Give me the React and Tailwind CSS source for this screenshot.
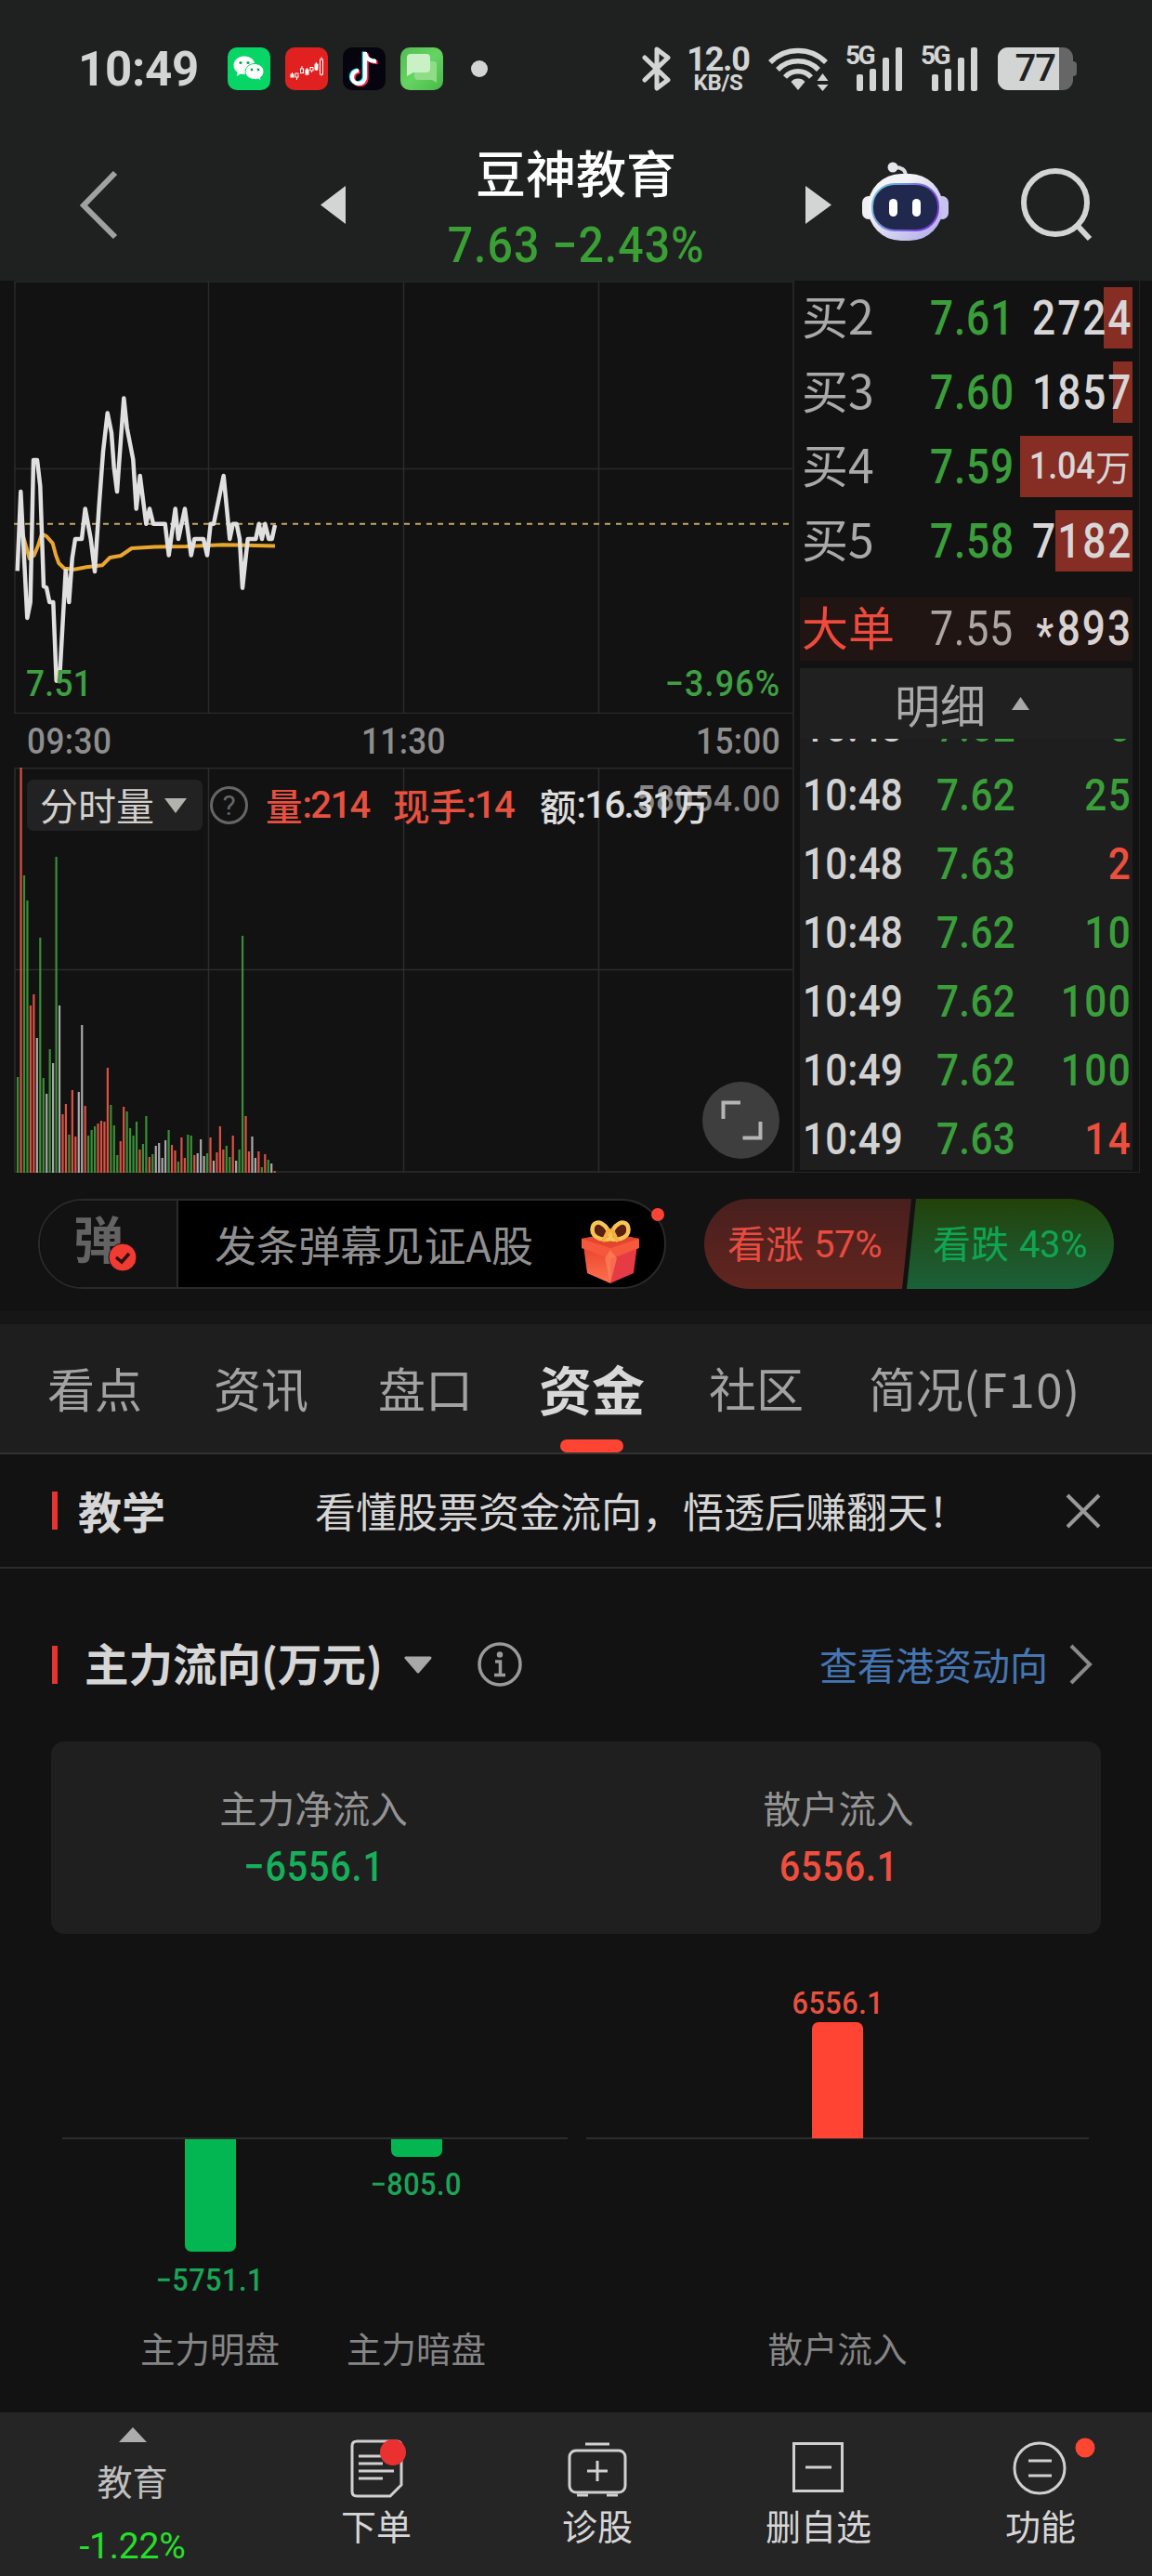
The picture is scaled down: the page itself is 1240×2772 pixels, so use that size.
import React from "react";

const CJK = "font-['Noto_Sans_CJK_SC',sans-serif]";
const NUM = "font-[Roboto,sans-serif] whitespace-nowrap";

const PRICE =
  "18.7,614.4 22.3,529 29.3,665 32.7,648 36,495 40,495 43.3,523 47,631 50,632.3 53.3,648 57.3,648 60.7,732.7 64,732.7 70.7,614 74.3,648 77.7,601 81,580 88,580 91.7,547.5 97.7,580 102,615 106.7,543.4 111,486 115.7,444.4 120,465.7 122.7,503 126,529 133.3,428.5 136.7,460.6 143.3,494.4 146.7,547.5 150.7,512 157.3,563.7 161,547.5 165,563.7 177.7,563.7 181.7,597.5 188.7,547.5 192,580 199,547.5 205.7,597.5 209.3,580 219,580 223,597.5 226.7,563.7 230,563.7 240.7,512 247.3,580 250.7,563.7 254.7,563.7 258,580 261,632.7 266.7,580 275.3,580 278.7,563.7 282,580 285.3,563.7 289.3,580 292.7,580 296,565";
const AVERAGE =
  "25,577 31.7,601 36.7,597.5 41,587 45,574.5 50,577 56.7,584.6 60,597 63.3,606 69.3,611.7 80,612.7 93,610.3 110,608.3 118.3,600 130,598 141.7,590 166.7,588.4 200,588 240,586.3 296,587.4";

const COLORS = { r: "#dc5142", g: "#3a8f36", w: "#aaa8a8" };
const VOLUME = [
  ["g", 103], ["r", 437], ["g", 320], ["g", 293], ["r", 180], ["r", 192], ["w", 145], ["g", 253], ["g", 102],
  ["w", 85], ["g", 133], ["w", 118], ["g", 340], ["w", 180], ["r", 63], ["r", 74], ["g", 41], ["r", 89],
  ["r", 39], ["w", 87], ["w", 159], ["r", 72], ["g", 40], ["g", 46], ["g", 50], ["r", 53], ["r", 56],
  ["r", 55], ["r", 113], ["g", 73], ["g", 51], ["g", 19], ["r", 34], ["r", 71], ["g", 66], ["g", 48],
  ["g", 40], ["g", 55], ["r", 25], ["g", 31], ["g", 61], ["r", 17], ["g", 20], ["w", 29], ["w", 32],
  ["w", 16], ["w", 35], ["g", 46], ["r", 30], ["r", 24], ["g", 12], ["r", 38], ["r", 16], ["g", 41],
  ["g", 40], ["r", 19], ["w", 21], ["w", 36], ["w", 18], ["g", 21], ["r", 38], ["w", 13], ["r", 22],
  ["r", 50], ["r", 25], ["g", 29], ["g", 17], ["r", 40], ["w", 13], ["g", 25], ["g", 255], ["r", 61],
  ["r", 23], ["w", 39], ["w", 16], ["r", 23], ["g", 6], ["r", 20], ["g", 14], ["w", 10], ["r", 2],
];

const BIDS = [
  { label: "买2", price: "7.61", vol: "2724", bar: "w-[31px]" },
  { label: "买3", price: "7.60", vol: "1857", bar: "w-[21px]" },
  { label: "买4", price: "7.59", vol: "1.04", unit: "万", bar: "w-[121px]" },
  { label: "买5", price: "7.58", vol: "7182", bar: "w-[83px]" },
];

const TRADES = [
  ["10:48", "7.62", "6", "g"],
  ["10:48", "7.62", "25", "g"],
  ["10:48", "7.63", "2", "r"],
  ["10:48", "7.62", "10", "g"],
  ["10:49", "7.62", "100", "g"],
  ["10:49", "7.62", "100", "g"],
  ["10:49", "7.63", "14", "r"],
];

function Signal() {
  return (
    <div className="relative h-[48px] w-[63px]">
      <span className={`${NUM} absolute left-0 top-0 text-[28px] font-bold leading-[20px] tracking-[-2.500px] text-[#d3d5d4]`}>5G</span>
      <svg className="block h-[48px] w-[63px]" viewBox="0 0 63 48" fill="#d3d5d4">
        <rect x="12" y="30" width="7" height="18" rx="2" />
        <rect x="26" y="24" width="7" height="24" rx="2" />
        <rect x="40" y="12" width="7" height="36" rx="2" />
        <rect x="54" y="1" width="7" height="47" rx="2" />
      </svg>
    </div>
  );
}

function StatusBar() {
  return (
    <div className="flex h-[148px] items-center">
      <span className={`${NUM} ml-[84px] w-[161px] text-[51px] font-bold leading-none tracking-[-.3px] text-[#d3d5d4]`}>10:49</span>
      <div className="flex gap-[16px]">
        <svg className="h-[46px] w-[46px]" viewBox="0 0 46 46">
          <rect width="46" height="46" rx="10" fill="#07d566" />
          <path d="M18 9.500c-6.600 0-11.500 4.300-11.500 9.700 0 3.100 1.500 5.700 4.200 7.500l-1 4 4.500-2.200c1.200.3 2.500.4 3.800.4 6.600 0 11.500-4.300 11.500-9.700S24.600 9.500 18 9.500z" fill="#fff" />
          <path d="M29 17.500c-5.600 0-10 3.900-10 8.500s4.400 8.500 10 8.500c1.300 0 2.500-.2 3.600-.6l3.600 1.900-.9-3.400c2.300-1.600 3.700-3.800 3.700-6.400 0-4.600-4.400-8.500-10-8.500z" fill="#fff" stroke="#07d566" />
          <g fill="#07a850"><circle cx="14" cy="16.500" r="1.600" /><circle cx="22" cy="16.500" r="1.600" /><circle cx="26" cy="24" r="1.400" /><circle cx="33" cy="24" r="1.400" /></g>
        </svg>
        <svg className="h-[46px] w-[46px]" viewBox="0 0 46 46">
          <rect width="46" height="46" rx="10" fill="#e0211f" />
          <g stroke="#fff" strokeWidth="1" fill="none">
            <rect x="6" y="29" width="3" height="3" fill="#fff" /><path d="M7.500 27v5" />
            <rect x="11" y="28" width="3" height="4" /><path d="M12.500 32v3" />
            <rect x="16.500" y="23" width="3" height="4.500" /><path d="M18 20v3" />
            <rect x="22" y="24" width="3" height="5" fill="#fff" /><path d="M23.500 22v8" />
            <rect x="27" y="21.500" width="3" height="3.500" /><path d="M28.500 25v2" />
            <rect x="32" y="18" width="3" height="6" fill="#fff" /><path d="M33.500 16v9" />
            <rect x="37.500" y="13" width="3" height="16" /><path d="M39 10.500V13M39 29v1.500" />
          </g>
        </svg>
        <svg className="h-[46px] w-[46px]" viewBox="0 0 46 46">
          <rect width="46" height="46" rx="10" fill="#05040f" />
          <g fill="none" strokeWidth="4.200">
            <path d="M24 5v27a7 7 0 1 1-7-7M24 6c1 6 5 9 12 9" stroke="#25e5e5" transform="translate(-1.200,-.6)" />
            <path d="M24 5v27a7 7 0 1 1-7-7M24 6c1 6 5 9 12 9" stroke="#f92b55" transform="translate(1.600,1.200)" />
            <path d="M24 5v27a7 7 0 1 1-7-7M24 6c1 6 5 9 12 9" stroke="#fff" />
          </g>
        </svg>
        <svg className="h-[46px] w-[46px]" viewBox="0 0 46 46">
          <defs><linearGradient id="msg" x1="0" y1="0" x2="1" y2="1"><stop offset="0" stopColor="#52bd52" /><stop offset=".5" stopColor="#66d462" /><stop offset="1" stopColor="#47b847" /></linearGradient></defs>
          <rect width="46" height="46" rx="10" fill="url(#msg)" />
          <path d="M18 15h18q3 0 3 3v20l-5-3H19q-4 0-4-4V18z" fill="#8fdd87" />
          <path d="M11 7h17q4 0 4 4v12q0 4-4 4H14l-7 4V11q0-4 4-4z" fill="#caf0c6" />
        </svg>
      </div>
      <span className="ml-[30px] size-[18px] rounded-full bg-[#d3d5d4]" />
      <svg className="ml-[166px] h-[50px] w-[32px]" viewBox="0 0 32 50" fill="none" stroke="#d3d5d4" strokeWidth="5" strokeLinejoin="round" strokeLinecap="round">
        <path d="M3 13l25 24L16 46V4l12 9L3 37" />
      </svg>
      <div className={`${NUM} ml-[14px] flex w-[72px] flex-col items-center text-[#d3d5d4]`}>
        <span className="text-[36px] font-bold leading-[29px] tracking-[-1.200px]">12.0</span>
        <span className="text-[24px] font-bold leading-[20px] tracking-[-.3px]">KB/S</span>
      </div>
      <svg className="ml-[18px] h-[48px] w-[68px]" viewBox="0 0 68 48" fill="none" stroke="#d3d5d4" strokeWidth="5.500">
        <path d="M2 17a42 42 0 0 1 60 0M10 25a31 31 0 0 1 44 0M18 33a19 19 0 0 1 28 0" />
        <path d="M24.500 38a10 10 0 0 1 15 0L32 47z" fill="#d3d5d4" stroke="none" />
        <path d="M52.500 37l6-8 6 8zM52.500 41h12l-6 7z" fill="#d3d5d4" stroke="none" />
      </svg>
      <div className="ml-[15px] flex gap-[18px]"><Signal /><Signal /></div>
      <div className="ml-[20px] flex items-center">
        <div className="flex h-[46px] w-[81px] overflow-hidden rounded-[11px] bg-[#666]">
          <div className={`${NUM} flex w-[66px] items-center justify-end bg-[#d3d5d4] pr-[4px] text-[40px] font-medium leading-none tracking-[-1px] text-[#202221]`}>77</div>
        </div>
        <div className="h-[16px] w-[4px] rounded-r-[4px] bg-[#666]" />
      </div>
    </div>
  );
}

function Header() {
  return (
    <div className="flex h-[154px] items-start">
      <svg className="ml-[84px] mt-[34px] h-[76px] w-[46px]" viewBox="0 0 46 76" fill="none" stroke="#a0a2a1" strokeWidth="6"><path d="M40 4L6 39l34 34" /></svg>
      <svg className="ml-[215px] mt-[52px] h-[41px] w-[27px]" viewBox="0 0 27 41" fill="#d3d5d4"><path d="M27 0v41L0 20.500z" /></svg>
      <div className="ml-[112px] flex w-[272px] flex-col items-center">
        <span className="mt-[7px] whitespace-nowrap text-[54px] font-medium leading-[60px] text-white">豆神教育</span>
        <span className={`${NUM} mt-[16px] scale-x-[.91] text-[53px] font-medium leading-[66px] tracking-[1.100px] text-[#3a9f35]`}>7.63 −2.43%</span>
      </div>
      <svg className="ml-[111px] mt-[52px] h-[41px] w-[28px]" viewBox="0 0 28 41" fill="#d3d5d4"><path d="M0 0v41l28-20.500z" /></svg>
      <svg className="ml-[32px] mt-[25px] h-[88px] w-[96px]" viewBox="0 0 96 88">
        <defs>
          <linearGradient id="shell" x1="0" y1="0" x2="1" y2="1"><stop offset="0.300" stopColor="#f4f4f6" /><stop offset="1" stopColor="#a9a4e8" /></linearGradient>
          <linearGradient id="rim" x1="0" y1="0" x2="1" y2="0.400"><stop offset="0" stopColor="#6ed0e8" /><stop offset="1" stopColor="#7a3cd8" /></linearGradient>
        </defs>
        <path d="M34 7q14-1 14 10" fill="none" stroke="#dcdde4" strokeWidth="4" />
        <circle cx="34" cy="7" r="5.500" fill="#e6e7ec" />
        <rect x="1" y="38" width="14" height="25" rx="7" fill="#eeeef4" />
        <rect x="80" y="38" width="14" height="25" rx="7" fill="#c6c3f0" />
        <rect x="7" y="14" width="81" height="72" rx="36" fill="url(#shell)" />
        <rect x="12" y="25" width="71" height="50" rx="24" fill="#20284e" stroke="url(#rim)" strokeWidth="2" />
        <rect x="30" y="41" width="9" height="19" rx="4.500" fill="#fff" />
        <rect x="55" y="41" width="9" height="19" rx="4.500" fill="#fff" />
      </svg>
      <svg className="ml-[73px] mt-[32px] h-[80px] w-[80px]" viewBox="0 0 80 80" fill="none" stroke="#d3d5d4" strokeWidth="6"><circle cx="40" cy="38" r="34" /><path d="M63 62l14 15" /></svg>
    </div>
  );
}

function PriceChart() {
  return (
    <div className="relative h-[466px]">
      <svg className="block h-[466px] w-[853px]" viewBox="0 302 853 466">
        <g stroke="#2a2a2a" strokeWidth="1.500" fill="none">
          <path d="M16 303H853M16 303V768M16 504.500H853M224.500 303V768M434.500 303V768M644.500 303V768M16 767.500H853" />
        </g>
        <path d="M15 563.700H853" stroke="#c4a862" strokeWidth="2" strokeDasharray="6 6" />
        <polyline points={AVERAGE} fill="none" stroke="#eaa62e" strokeWidth="4" strokeLinejoin="round" />
        <polyline points={PRICE} fill="none" stroke="#e0e0e0" strokeWidth="4.500" strokeLinejoin="round" />
      </svg>
      <div className={`${NUM} absolute bottom-[13px] left-[28px] right-[13px] flex justify-between text-[39px] font-medium leading-[38px] text-[#3fa043]`}>
        <span className="origin-left scale-x-[.9] tracking-[.4px]">7.51</span>
        <span className="origin-right scale-x-[.92] tracking-[1.200px]">−3.96%</span>
      </div>
    </div>
  );
}

function VolumeChart() {
  return (
    <div className="relative h-[436px]">
      <svg className="block h-[436px] w-[853px]" viewBox="0 826 853 436">
        <path d="M16 826.500H853M16 826V1262M16 1043.500H853M224.500 826V1262M434.500 826V1262M644.500 826V1262M16 1261H853" stroke="#2c2c2c" strokeWidth="1.500" fill="none" />
        {VOLUME.map(([c, h], i) => (
          <rect key={i} x={18 + i * 3.457} y={1262 - h} width="2.200" height={h} fill={COLORS[c]} />
        ))}
      </svg>
      <span className={`${NUM} absolute right-[13px] top-[15px] origin-right scale-x-[.9] text-[39px] font-medium leading-[38px] tracking-[.8px] text-[#868686]`}>58054.00</span>
      <div className="absolute left-[29px] top-[13px] flex h-[55px] items-center">
        <div className="flex h-[55px] w-[189px] items-center rounded-[7px] bg-[#232222] pl-[14px] text-[41px] leading-none text-[#d2d0cd]">
          <span className="-mt-[2px]">分时量</span>
          <svg className="ml-[11px] h-[16px] w-[24px]" viewBox="0 0 24 16" fill="#b4b2af"><path d="M0 0h24L12 16z" /></svg>
        </div>
        <div className="ml-[8px] flex size-[41px] items-center justify-center rounded-full border-[3px] border-[#666]">
          <span className={`${NUM} text-[30px] leading-none text-[#666]`}>?</span>
        </div>
        <Reading cls="ml-[19px] w-[137px] text-[#e8503f]" label="量" value="214" />
        <Reading cls="w-[158px] text-[#e8503f]" label="现手" value="14" />
        <Reading cls="text-[#dedede]" label="额" value="16.31" unit="万" />
      </div>
      <div className="absolute bottom-[15px] right-[14px] size-[83px] rounded-full bg-[#3e3e3e]">
        <svg className="size-[83px]" viewBox="0 0 83 83" fill="none" stroke="#b4b4b4" strokeWidth="4"><path d="M22.500 40V22.500H41M62.500 43v17.500H43.500" /></svg>
      </div>
    </div>
  );
}

function Reading({ cls, label, value, unit }) {
  return (
    <div className={`flex items-center whitespace-nowrap text-[39.500px] leading-none ${cls}`}>
      <span className="-mt-[2px] font-medium">{label}</span>
      <span className={`${NUM} text-[40px] font-medium tracking-[-1.700px]`}>:{value}</span>
      {unit && <span className="-mt-[2px] ml-px font-medium">{unit}</span>}
    </div>
  );
}

function OrderBook() {
  return (
    <div className="h-[960px] w-[374px] border-b border-l-2 border-r border-[#242424] pl-[6px]">
      <div className="flex flex-col gap-[14px] pt-[7px]">
        {BIDS.map((b) => (
          <div key={b.label} className="relative flex h-[66px] w-[358px] items-center">
            <div className={`absolute right-0 top-0 h-[66px] bg-[#862d24] ${b.bar}`} />
            <span className="-mt-[9px] w-[140px] shrink-0 pl-[2px] text-[50px] leading-none text-[#a9a9a9]">{b.label}</span>
            <span className={`${NUM} mt-[1px] w-[100px] shrink-0 origin-left scale-x-[.85] text-[52px] font-medium leading-none tracking-[1px] text-[#3a9f3a]`}>{b.price}</span>
            <span className="relative flex min-w-0 flex-1 items-center justify-end text-[#d8d6d6]">
              {b.unit ? (
                <>
                  <span className={`${NUM} origin-right scale-x-[.9] text-[40px] font-medium leading-none tracking-[-.2px]`}>{b.vol}</span>
                  <span className="-mt-[3px] mr-[2px] text-[38px] leading-none">{b.unit}</span>
                </>
              ) : (
                <span className={`${NUM} mt-[1px] origin-right scale-x-[.85] text-[52px] font-medium leading-none tracking-[2.300px]`}>{b.vol}</span>
              )}
            </span>
          </div>
        ))}
      </div>
      <div className="mt-[28px] flex h-[68px] w-[358px] items-center bg-[#211513]">
        <span className="-mt-[9px] w-[140px] shrink-0 pl-[2px] text-[50px] leading-none text-[#f04a3c]">大单</span>
        <span className={`${NUM} w-[100px] shrink-0 origin-left scale-x-[.86] text-[52px] leading-none tracking-[.8px] text-[#aba5a3]`}>7.55</span>
        <span className={`${NUM} flex min-w-0 flex-1 origin-right scale-x-[.85] items-center justify-end text-[52px] font-medium leading-none tracking-[2.300px] text-[#dad3d2]`}>
          <span className="mr-[2px] mt-[13px] text-[50px]">*</span>893
        </span>
      </div>
      <div className="mt-[8px] h-[540px] w-[358px] bg-[#1e1e1e]">
        <div className="flex h-[76px] items-center bg-[#212020] pl-[102px]">
          <span className="-mt-[2px] text-[49px] leading-none text-[#a9a9a9]">明细</span>
          <svg className="ml-[28px] h-[14px] w-[19px]" viewBox="0 0 19 14" fill="#a9a9a9"><path d="M9.500 0L19 14H0z" /></svg>
        </div>
        <div className="h-[464px] overflow-hidden">
          <div className="-mt-[50px]">
            {TRADES.map(([t, p, v, c], i) => (
              <div key={i} className={`${NUM} flex h-[74px] items-center text-[48px] font-medium leading-none`}>
                <span className="ml-[3px] w-[144px] origin-left scale-x-[.88] tracking-[.2px] text-[#d2d2d2]">{t}</span>
                <span className="w-[90px] origin-left scale-x-[.88] tracking-[.4px] text-[#3a9f3a]">{p}</span>
                <span className={`flex-1 origin-right scale-x-[.88] pr-[1px] text-right tracking-[1.600px] ${c === "g" ? "text-[#3a9f3a]" : "text-[#ee4f3d]"}`}>{v}</span>
              </div>
            ))}
          </div>
        </div>
      </div>
    </div>
  );
}

function BarrageBar() {
  return (
    <div className="flex h-[149px] items-start pt-[28px]">
      <div className="relative ml-[41px] flex h-[97px] w-[676px] items-center rounded-full border-2 border-[#2a2a2a] bg-black">
        <div className="relative flex h-full w-[149px] items-center rounded-l-full border-r-2 border-[#2a2a2a] bg-[#121212] pl-[36px]">
          <span className="-mt-[14px] text-[54px] font-bold leading-none text-[#636363]">弹</span>
          <svg className="absolute left-[73px] top-[45px] size-[32px]" viewBox="0 0 32 32"><circle cx="16" cy="16" r="15" fill="#f13b32" stroke="#121212" /><path d="M9 16l6 5 8-9" fill="none" stroke="#2a1010" strokeWidth="3.500" /></svg>
        </div>
        <span className="ml-[39px] w-[393px] whitespace-nowrap text-[45.100px] leading-none text-[#8f8f8f]">发条弹幕见证A股</span>
        <svg className="mt-[16px] h-[70px] w-[66px]" viewBox="0 0 66 70">
          <defs><linearGradient id="gift" x1="0" y1="0" x2="0" y2="1"><stop offset="0" stopColor="#e8432c" /><stop offset="1" stopColor="#ff7050" /></linearGradient></defs>
          <path d="M4 28l29 14v27L8 58z" fill="url(#gift)" />
          <path d="M62 28L33 42v27l25-11z" fill="#e63a44" />
          <path d="M2 21L33 15l31 6v10L33 43 2 31z" fill="#f5583c" />
          <path d="M2 21l31 10 31-10-31-6z" fill="#e4452f" />
          <path d="M33 33L27 42l6 27 7-27z" fill="#ff8d5c" opacity=".6" />
          <path d="M33 21C22 24 11 18 14 8 17-1 31 4 33 21zM33 21c11 3 22-3 19-13C49-1 35 4 33 21z" fill="#5a2010" stroke="#f8c455" strokeWidth="4.500" />
          <path d="M32 10l-7 14M34 10l7 14" stroke="#f6ae3c" strokeWidth="4" />
        </svg>
        <span className="absolute right-0 top-[8px] size-[14px] rounded-full bg-[#fd4335]" />
      </div>
      <div className="ml-[41px] flex h-[97px] w-[441px] overflow-hidden rounded-full">
        <div className="flex w-[223px] items-center bg-linear-to-b from-[#471f1d] to-[#62251f] pl-[25px] [clip-path:polygon(0_0,100%_0,calc(100%-10px)_100%,0_100%)]">
          <Vote word="看涨" pct="57%" cls="text-[#e84c40]" />
        </div>
        <div className="-ml-[5px] flex w-[223px] items-center bg-linear-to-b from-[#214209] to-[#1a6138] pl-[28px] [clip-path:polygon(10px_0,100%_0,100%_100%,0_100%)]">
          <Vote word="看跌" pct="43%" cls="text-[#10a552]" />
        </div>
      </div>
    </div>
  );
}

function Vote({ word, pct, cls }) {
  return (
    <span className={`flex items-center whitespace-nowrap leading-none ${cls}`}>
      <span className="-mt-[4px] text-[41px]">{word}</span>
      <span className={`${NUM} ml-[11px] mt-[2px] text-[40px] tracking-[-.4px]`}>{pct}</span>
    </span>
  );
}

function Tabs() {
  return (
    <div className="flex h-[140px] items-center whitespace-nowrap border-b-2 border-[#333] bg-[#1e1e1e] pb-[3px] text-[51px] leading-[60px] text-[#a2a2a2]">
      <span className="ml-[51px] w-[179px]">看点</span>
      <span className="w-[177px]">资讯</span>
      <span className="w-[173px]">盘口</span>
      <span className="relative w-[183px] text-[57px] font-bold text-[#d8d8d8]">
        资金
        <i className="absolute -bottom-[40px] left-[23px] h-[14px] w-[68px] rounded-full bg-[#ff4433]" />
      </span>
      <span className="w-[172px]">社区</span>
      <span>简况<span className="tracking-[1.500px]">(F10)</span></span>
    </div>
  );
}

function LessonBanner() {
  return (
    <div className="flex h-[123px] items-center border-b-2 border-[#2b2b2b]">
      <i className="ml-[56px] h-[41px] w-[6px] bg-[#e5332f]" />
      <span className="-mt-[2px] ml-[22px] w-[255px] text-[47px] font-bold leading-none text-[#d6d6d6]">教学</span>
      <span className="-mt-[2px] w-[808px] whitespace-nowrap text-[44px] leading-none text-[#d6d6d6]">看懂股票资金流向，悟透后赚翻天！</span>
      <svg className="h-[38px] w-[38px]" viewBox="0 0 38 38" stroke="#999" strokeWidth="4"><path d="M2 2l34 34M36 2L2 36" /></svg>
    </div>
  );
}

function FlowHeader() {
  return (
    <div className="mt-[63px] flex h-[80px] items-center">
      <i className="ml-[56px] h-[41px] w-[6px] bg-[#e5332f]" />
      <span className="-mt-[4px] ml-[29px] w-[343px] whitespace-nowrap text-[47.500px] font-bold leading-none text-[#d6d6d6]">主力流向(万元)</span>
      <svg className="h-[19px] w-[32px]" viewBox="0 0 32 19" fill="#a8a8a8" stroke="#a8a8a8" strokeWidth="3" strokeLinejoin="round"><path d="M3 2h26L16 17z" /></svg>
      <svg className="ml-[48px] size-[48px]" viewBox="0 0 48 48" fill="none" stroke="#9a9a9a" strokeWidth="3.500"><circle cx="24" cy="24" r="22" /><path d="M19 21h5.500v14M18 35.500h12" /><circle cx="24" cy="13.500" r="1.500" fill="#9a9a9a" /></svg>
      <span className="-mt-[2px] ml-[320px] w-[269px] whitespace-nowrap text-[41px] leading-none text-[#4676b2]">查看港资动向</span>
      <svg className="h-[44px] w-[26px]" viewBox="0 0 26 44" fill="none" stroke="#8a8a8a" strokeWidth="4"><path d="M2 2l20 20L2 42" /></svg>
    </div>
  );
}

function Summary({ title, value, cls }) {
  return (
    <div className="flex w-[565px] flex-col items-center">
      <span className="mt-[42px] text-[40.500px] leading-[58px] text-[#949494]">{title}</span>
      <span className={`${NUM} mt-[9px] scale-x-[.88] text-[45px] font-medium leading-[52px] tracking-[.9px] ${cls}`}>{value}</span>
    </div>
  );
}

function FlowColumn({ cls, children, label }) {
  return (
    <div className={`flex h-[476px] shrink-0 flex-col items-center ${cls}`}>
      <div className="flex h-[389px] w-full flex-col items-center">{children}</div>
      <span className="mt-[26px] whitespace-nowrap text-[37.500px] leading-[60px] text-[#858585]">{label}</span>
    </div>
  );
}

function FlowChart() {
  const value = `${NUM} scale-x-[.9] text-[34px] font-medium leading-[34px] tracking-[.6px]`;
  return (
    <div className="flex h-[515px]">
      <div className="ml-[67px] flex w-[544px] bg-[linear-gradient(#2c2c2c,#2c2c2c)] bg-[length:100%_2px] bg-[position:0_219px] bg-no-repeat">
        <FlowColumn cls="ml-[48px] w-[222px]" label="主力明盘">
          <i className="mt-[221px] h-[127px] w-[55px] rounded-b-[7px] bg-[#04b652]" />
          <span className={`${value} mt-[13px] text-[#1ba558]`}>−5751.1</span>
        </FlowColumn>
        <FlowColumn cls="w-[222px]" label="主力暗盘">
          <i className="mt-[221px] h-[19px] w-[55px] rounded-b-[7px] bg-[#04b652]" />
          <span className={`${value} mt-[12px] text-[#1ba558]`}>−805.0</span>
        </FlowColumn>
      </div>
      <div className="ml-[20px] flex w-[541px] justify-center bg-[linear-gradient(#2c2c2c,#2c2c2c)] bg-[length:100%_2px] bg-[position:0_219px] bg-no-repeat">
        <FlowColumn cls="w-[222px]" label="散户流入">
          <span className={`${value} mt-[57px] text-[#e8503f]`}>6556.1</span>
          <i className="mt-[4px] h-[125px] w-[55px] rounded-t-[7px] bg-[#ff4433]" />
        </FlowColumn>
      </div>
    </div>
  );
}

function NavItem({ cls, label, children }) {
  return (
    <div className={`flex flex-col items-center pt-[27px] ${cls}`}>
      <svg className="h-[68px] w-[68px] overflow-visible" viewBox="0 0 68 68" fill="none" stroke="#d0d0d0" strokeWidth="3">{children}</svg>
      <span className="mt-[1px] whitespace-nowrap text-[38px] leading-[50px] text-[#d6d6d6]">{label}</span>
    </div>
  );
}

function BottomNav() {
  return (
    <div className="flex h-[176px] bg-[#252525]">
      <div className="flex w-[285px] flex-col items-center">
        <svg className="mt-[16px] h-[16px] w-[30px]" viewBox="0 0 30 16" fill="#adadad"><path d="M15 0l15 16H0z" /></svg>
        <span className="mt-[16px] text-[38px] leading-[50px] text-[#c0c0c0]">教育</span>
        <span className={`${NUM} mt-[26px] text-[39px] leading-[40px] tracking-[-.2px] text-[#25e02a]`}>-1.22%</span>
      </div>
      <NavItem cls="w-[240px]" label="下单">
        <path d="M12 4h44q5 0 5 5v42L49 63H13q-5 0-5-5V9q0-5 5-5z" />
        <path d="M15 20h24M15 28h26M15 36h38M15 44h26" />
        <circle cx="52" cy="16" r="14" fill="#ea3030" stroke="none" />
      </NavItem>
      <NavItem cls="w-[236px]" label="诊股">
        <rect x="4" y="14" width="60" height="45" rx="7" />
        <path d="M21 7h26M12 62h12M44 62h12" />
        <path d="M34 25v22M23 36h22" />
      </NavItem>
      <NavItem cls="w-[240px]" label="删自选">
        <rect x="7.500" y="6.500" width="52" height="51" />
        <path d="M20 32h28" />
      </NavItem>
      <NavItem cls="w-[238px]" label="功能">
        <circle cx="33" cy="33" r="27" />
        <path d="M21 25h25M21 41h25" />
        <circle cx="82" cy="11" r="10.500" fill="#ff4632" stroke="none" />
      </NavItem>
    </div>
  );
}

export default function App() {
  return (
    <div className={`${CJK} flex h-[2772px] w-[1240px] flex-col overflow-hidden bg-[#121212]`}>
      <div className="h-[302px] bg-[#1f2120]">
        <StatusBar />
        <Header />
      </div>
      <div className="flex h-[960px]">
        <div className="w-[853px]">
          <PriceChart />
          <div className={`${NUM} flex h-[58px] items-center justify-between pl-[29px] pr-[13px] pt-[2px] text-[39px] font-medium leading-none text-[#8e8e8e]`}>
            <span className="origin-left scale-x-[.9] tracking-[.5px]">09:30</span>
            <span className="scale-x-[.9] tracking-[.4px]">11:30</span>
            <span className="origin-right scale-x-[.9] tracking-[.4px]">15:00</span>
          </div>
          <VolumeChart />
        </div>
        <OrderBook />
      </div>
      <BarrageBar />
      <div className="h-[14px] bg-[#161616]" />
      <Tabs />
      <LessonBanner />
      <FlowHeader />
      <div className="mx-[55px] mt-[43px] flex h-[207px] shrink-0 rounded-[14px] bg-[#1f1f1f]">
        <Summary title="主力净流入" value="−6556.1" cls="text-[#16b05b]" />
        <Summary title="散户流入" value="6556.1" cls="text-[#f04e3e]" />
      </div>
      <FlowChart />
      <BottomNav />
    </div>
  );
}
